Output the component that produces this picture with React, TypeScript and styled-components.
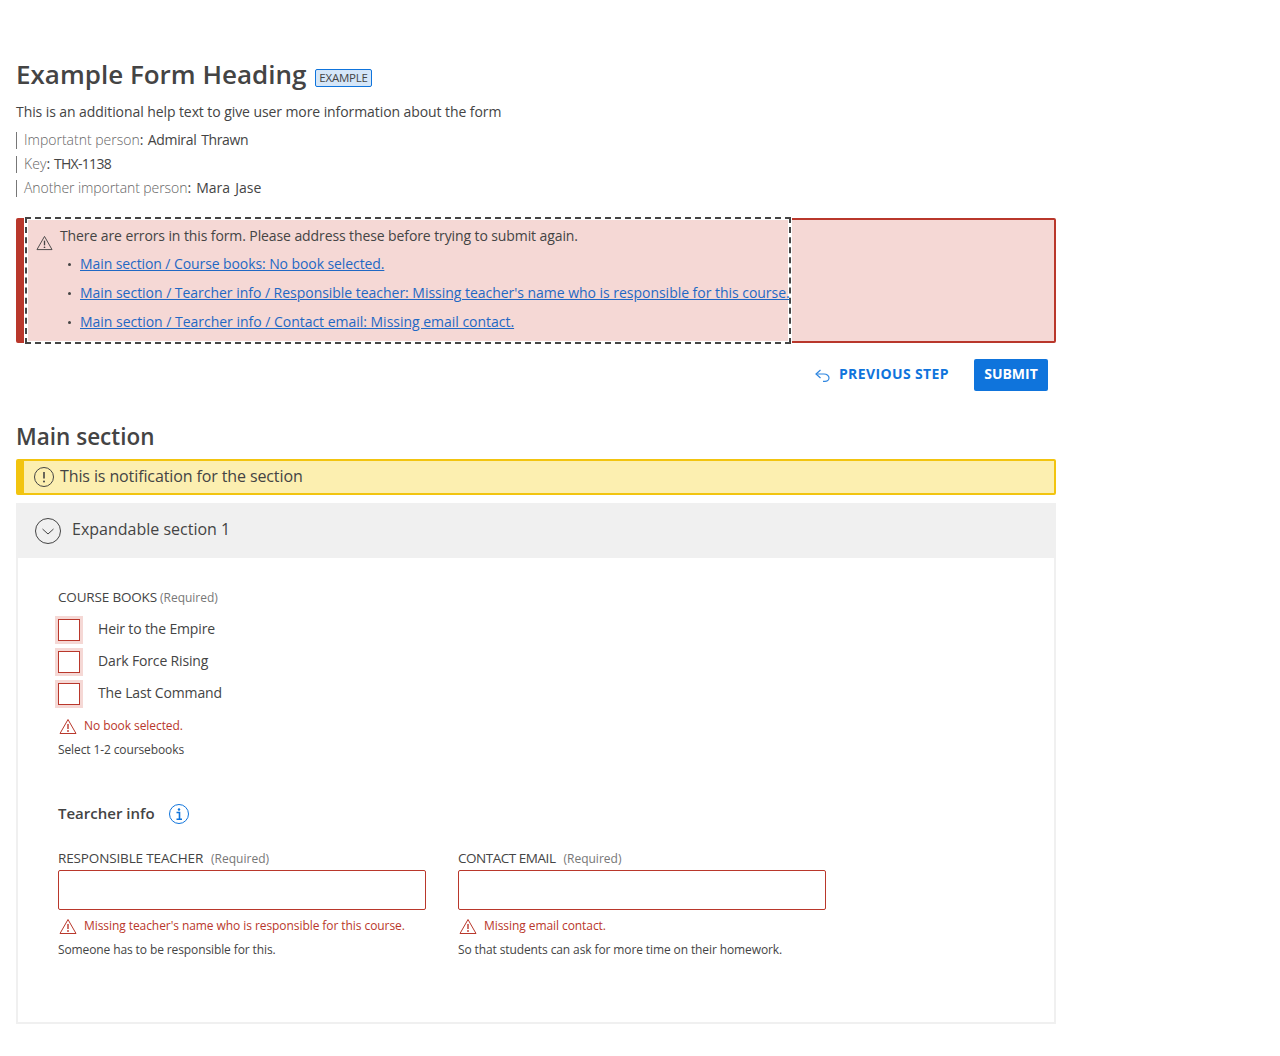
import React from "react";
import styled, { createGlobalStyle } from "styled-components";

const Global = createGlobalStyle`
  html, body { margin: 0; padding: 0; background: #fff; }
  body { font-family: "Open Sans", "Noto Sans", sans-serif; color: #444; }
  * { box-sizing: border-box; }
`;

const Page = styled.main`
  width: 1056px;
  padding: 55px 0 0 16px;
`;
const TitleRow = styled.div`
  display: flex;
  align-items: center;
  height: 40px;
  gap: 9px;
`;
const Title = styled.h1`
  margin: 0;
  padding-bottom: 2px;
  font-size: 26px;
  line-height: 38px;
  font-weight: 600;
  color: #444;
`;
const Tag = styled.span`
  display: inline-flex;
  align-items: center;
  height: 18px;
  margin-top: 5px;
  padding: 0 3px;
  border: 1px solid #0f74dc;
  border-radius: 2px;
  background: #d5e6f8;
  font-size: 11.5px;
  letter-spacing: -0.25px;
  color: #444;
`;
const HelpText = styled.p`
  margin: 5px 0 4px;
  font-size: 14px;
  line-height: 24px;
  letter-spacing: -0.08px;
`;
const MetaRow = styled.div`
  display: flex;
  align-items: center;
  height: 24px;
  font-size: 14px;
  &::before {
    content: "";
    width: 1px;
    height: 17px;
    background: #777;
    margin-right: 7px;
  }
`;
const MetaKey = styled.span<{ $ls: number }>`
  color: #666;
  font-weight: 300;
  padding-bottom: 2px;
  letter-spacing: ${(p) => p.$ls}px;
`;
const MetaValue = styled.span<{ $ls: number }>`
  padding-bottom: 2px;
  white-space: pre;
  word-spacing: 1.5px;
  letter-spacing: ${(p) => p.$ls}px;
`;
const ErrorBox = styled.section`
  margin-top: 18px;
  height: 125px;
  border: 2px solid #b9372b;
  border-left-width: 8px;
  border-radius: 2px;
  background: #f5d8d5;
`;
const ErrorInner = styled.div`
  width: 762px;
  height: 123px;
  margin: -1px 0 -1px 3px;
  outline: 2px dashed #444;
  box-shadow: 0 0 0 3px #fff, inset 0 0 0 1px #fff;
  background: #f5d8d5;
  display: flex;
  padding: 6px 0 0 9px;
  font-size: 14px;
`;
const ErrorIcon = styled.svg`
  width: 17px;
  height: 16px;
  margin-top: 10px;
  flex: none;
`;
const ErrorBody = styled.div`
  margin-left: 7px;
  white-space: nowrap;
`;
const ErrorLead = styled.div`
  line-height: 22px;
  letter-spacing: -0.1px;
`;
const ErrorList = styled.ul`
  margin: 5px 0 0;
  padding: 0 0 0 20px;
  list-style: none;
`;
const ErrorItem = styled.li`
  position: relative;
  height: 29px;
  line-height: 24px;
  &::before {
    content: "";
    position: absolute;
    left: -12px;
    top: 11px;
    width: 3px;
    height: 3px;
    border-radius: 50%;
    background: #444;
  }
`;
const ErrorLink = styled.a<{ $ls: number }>`
  color: #1f68c4;
  text-decoration: underline;
  letter-spacing: ${(p) => p.$ls}px;
`;
const Actions = styled.div`
  display: flex;
  justify-content: flex-end;
  align-items: center;
  margin-top: 16px;
  padding-right: 8px;
  gap: 25px;
`;
const PrevButton = styled.button`
  display: flex;
  align-items: center;
  gap: 9px;
  border: 0;
  background: none;
  padding: 0 0 3px;
  color: #0f74dc;
  font: 700 14px/20px "Open Sans", sans-serif;
  letter-spacing: 0.38px;
`;
const PrevIcon = styled.svg`
  width: 15px;
  height: 13px;
  margin-top: 4px;
`;
const SubmitButton = styled.button`
  width: 74px;
  height: 32px;
  border: 0;
  border-radius: 2px;
  background: #0f74dc;
  color: #fff;
  font: 700 14px/20px "Open Sans", sans-serif;
  letter-spacing: 0;
  padding: 0 0 3px;
`;
const SectionHeading = styled.h2`
  margin: 31px 0 7px;
  font-size: 22.5px;
  line-height: 30px;
  font-weight: 600;
  color: #444;
`;
const Notice = styled.div`
  display: flex;
  align-items: center;
  height: 36px;
  border: 2px solid #f2c40f;
  border-left-width: 8px;
  border-radius: 2px;
  background: #fcefb0;
  padding-left: 10px;
  gap: 6px;
  font-size: 16px;
  letter-spacing: -0.11px;
`;
const NoticeText = styled.span`
  padding-bottom: 2px;
`;
const ExpandHeader = styled.div`
  display: flex;
  align-items: center;
  height: 55px;
  margin-top: 8px;
  padding-left: 19px;
  gap: 11px;
  background: #f0f0f0;
  font-size: 16px;
`;
const ExpandTitle = styled.span`
  padding-bottom: 4px;
`;
const ExpandBody = styled.div`
  height: 466px;
  border: 2px solid #f0f0f0;
  border-top: 0;
  padding: 29px 0 0 40px;
`;
const FieldLabel = styled.div`
  display: flex;
  align-items: baseline;
  height: 20px;
  line-height: 20px;
  font-size: 13.5px;
  text-transform: uppercase;
`;
const LabelText = styled.span<{ $ls: number }>`
  letter-spacing: ${(p) => p.$ls}px;
`;
const Required = styled.span<{ $gap: number }>`
  margin-left: ${(p) => p.$gap}px;
  font-size: 12px;
  color: #777;
  text-transform: none;
`;
const CheckList = styled.div`
  margin-top: 7px;
`;
const CheckRow = styled.label`
  display: flex;
  align-items: center;
  height: 32px;
  font-size: 14px;
  letter-spacing: -0.15px;
`;
const CheckBox = styled.span`
  width: 22px;
  height: 22px;
  border: 1px solid #b9372b;
  box-shadow: 0 0 0 3px #f5d8d5;
  background: #fff;
  margin-right: 18px;
`;
const CheckText = styled.span`
  padding-bottom: 4px;
`;
const ErrorMessage = styled.div`
  display: flex;
  align-items: center;
  height: 24px;
  margin-top: 4px;
  font-size: 12px;
  letter-spacing: -0.07px;
  color: #b9372b;
  white-space: nowrap;
`;
const ErrorMessageText = styled.span`
  padding-bottom: 2px;
`;
const ErrorMessageIcon = styled.svg`
  width: 18px;
  height: 17px;
  margin: 1px 7px 0 1px;
  flex: none;
`;
const Hint = styled.div`
  height: 24px;
  line-height: 24px;
  font-size: 12px;
  letter-spacing: -0.11px;
  white-space: nowrap;
`;
const SubHeading = styled.div`
  display: flex;
  align-items: center;
  height: 24px;
  margin-top: 40px;
  gap: 14px;
  font-size: 15px;
  font-weight: 600;
`;
const SubHeadingText = styled.span`
  padding-bottom: 2px;
`;
const FieldGrid = styled.div`
  display: grid;
  grid-template-columns: 368px 368px;
  gap: 32px;
  margin-top: 22px;
`;
const TextBox = styled.div`
  height: 40px;
  margin-top: 2px;
  border: 1px solid #b9372b;
  border-radius: 2px;
  background: #fff;
`;

const Warn = ({ color }: { color: string }) => (
  <>
    <path d="M9 1.5 L17 15.5 H1 Z" fill="none" stroke={color} strokeWidth="1" strokeLinejoin="round" />
    <path d="M9 6v5" stroke={color} strokeWidth="1.4" />
    <circle cx="9" cy="13" r="0.9" fill={color} />
  </>
);

const Message = ({ text }: { text: string }) => (
  <ErrorMessage>
    <ErrorMessageIcon viewBox="0 0 18 17">
      <Warn color="#b9372b" />
    </ErrorMessageIcon>
    <ErrorMessageText>{text}</ErrorMessageText>
  </ErrorMessage>
);

const Field = ({ label, ls, error, hint }: { label: string; ls: number; error: string; hint: string }) => (
  <div>
    <FieldLabel>
      <LabelText $ls={ls}>{label}</LabelText>
      <Required $gap={8}>(Required)</Required>
    </FieldLabel>
    <TextBox />
    <Message text={error} />
    <Hint>{hint}</Hint>
  </div>
);

const books = ["Heir to the Empire", "Dark Force Rising", "The Last Command"];
const errors: [string, number][] = [
  ["Main section / Course books: No book selected.", -0.09],
  ["Main section / Tearcher info / Responsible teacher: Missing teacher's name who is responsible for this course.", -0.03],
  ["Main section / Tearcher info / Contact email: Missing email contact.", -0.02],
];
const meta: [string, number, string, number][] = [
  ["Importatnt person", 0, "Admiral Thrawn", -0.35],
  ["Key", 0.1, "THX-1138", -0.7],
  ["Another important person", -0.08, "Mara Jase", 0],
];

export default function App() {
  return (
    <Page>
      <Global />
      <TitleRow>
        <Title>Example Form Heading</Title>
        <Tag>EXAMPLE</Tag>
      </TitleRow>
      <HelpText>This is an additional help text to give user more information about the form</HelpText>
      {meta.map(([k, kls, v, vls]) => (
        <MetaRow key={k}>
          <MetaKey $ls={kls}>{k}</MetaKey>
          <MetaValue $ls={vls}>: {v}</MetaValue>
        </MetaRow>
      ))}
      <ErrorBox>
        <ErrorInner>
          <ErrorIcon viewBox="0 0 18 17">
            <Warn color="#444" />
          </ErrorIcon>
          <ErrorBody>
            <ErrorLead>There are errors in this form. Please address these before trying to submit again.</ErrorLead>
            <ErrorList>
              {errors.map(([e, ls]) => (
                <ErrorItem key={e}>
                  <ErrorLink href="#" $ls={ls}>{e}</ErrorLink>
                </ErrorItem>
              ))}
            </ErrorList>
          </ErrorBody>
        </ErrorInner>
      </ErrorBox>
      <Actions>
        <PrevButton>
          <PrevIcon viewBox="0 0 15 13" fill="none" stroke="#2f86e0" strokeWidth="1.2">
            <path d="M5.5 1 L1 5 L5.5 9" />
            <path d="M1 5 H9 C12 5 14 7 14 9 C14 11 12 12.4 10 12.4 H8" />
          </PrevIcon>
          PREVIOUS STEP
        </PrevButton>
        <SubmitButton>SUBMIT</SubmitButton>
      </Actions>
      <SectionHeading>Main section</SectionHeading>
      <Notice>
        <svg width="20" height="20" viewBox="0 0 20 20" fill="none" stroke="#444">
          <circle cx="10" cy="10" r="9.5" />
          <path d="M10 5v6.5" strokeWidth="1.6" />
          <circle cx="10" cy="14.5" r="1" fill="#444" stroke="none" />
        </svg>
        <NoticeText>This is notification for the section</NoticeText>
      </Notice>
      <ExpandHeader>
        <svg width="26" height="26" viewBox="0 0 26 26" fill="none" stroke="#444">
          <circle cx="13" cy="13" r="12.5" />
          <path d="M7.5 11 L13 16 L18.5 11" />
        </svg>
        <ExpandTitle>Expandable section 1</ExpandTitle>
      </ExpandHeader>
      <ExpandBody>
        <FieldLabel>
          <LabelText $ls={-0.17}>Course books</LabelText>
          <Required $gap={3}>(Required)</Required>
        </FieldLabel>
        <CheckList>
          {books.map((b) => (
            <CheckRow key={b}>
              <CheckBox />
              <CheckText>{b}</CheckText>
            </CheckRow>
          ))}
        </CheckList>
        <Message text="No book selected." />
        <Hint>Select 1-2 coursebooks</Hint>
        <SubHeading>
          <SubHeadingText>Tearcher info</SubHeadingText>
          <svg width="20" height="20" viewBox="0 0 20 20" fill="none" stroke="#0f74dc">
            <circle cx="10" cy="10" r="9.5" />
            <circle cx="10" cy="5.5" r="1.2" fill="#0f74dc" stroke="none" />
            <path d="M7.5 8.5H10.5V15M7.5 15.2H13" strokeWidth="1.6" />
          </svg>
        </SubHeading>
        <FieldGrid>
          <Field
            label="Responsible teacher"
            ls={-0.14}
            error="Missing teacher's name who is responsible for this course."
            hint="Someone has to be responsible for this."
          />
          <Field
            label="Contact email"
            ls={-0.47}
            error="Missing email contact."
            hint="So that students can ask for more time on their homework."
          />
        </FieldGrid>
      </ExpandBody>
    </Page>
  );
}
